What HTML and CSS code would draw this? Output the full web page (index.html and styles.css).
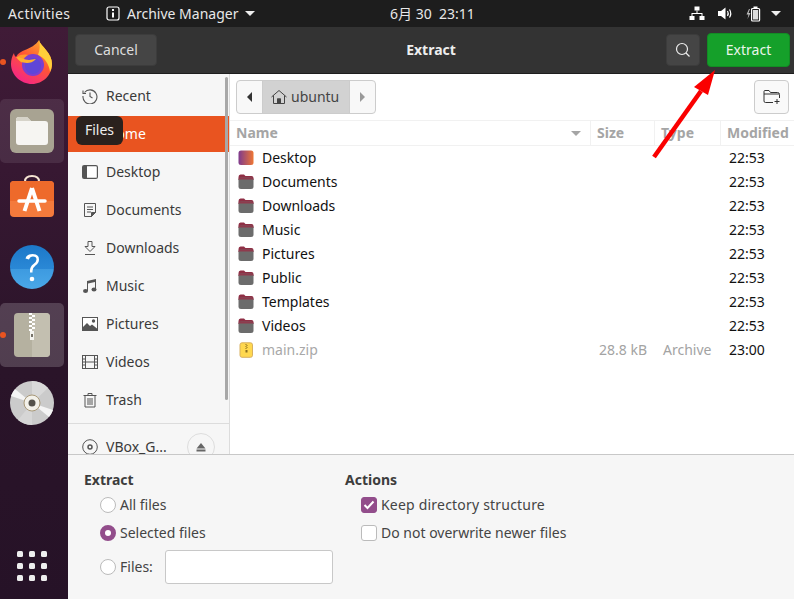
FILE: index.html
```html
<!DOCTYPE html>
<html lang="en">
<head>
<meta charset="utf-8">
<title>Extract</title>
<link rel="stylesheet" href="styles.css">
</head>
<body>
<svg class="defs" width="0" height="0" aria-hidden="true">
  <defs>
    <linearGradient id="deskg" x1="0" x2="1" y1="0" y2="0"><stop offset="0" stop-color="#7e3a8e"/><stop offset="1" stop-color="#ee7634"/></linearGradient>
    <linearGradient id="foxg" x1="0.8" x2="0.2" y1="0" y2="1"><stop offset="0" stop-color="#ffb02e"/><stop offset=".45" stop-color="#ff5634"/><stop offset="1" stop-color="#f5208f"/></linearGradient>
    <linearGradient id="helpg" x1="0" x2="0" y1="0" y2="1"><stop offset="0" stop-color="#1c78c8"/><stop offset=".54" stop-color="#2a88d6"/><stop offset=".54" stop-color="#3d9ae0"/><stop offset="1" stop-color="#4aa8e8"/></linearGradient>
    <symbol id="folder" viewBox="0 0 16 16">
      <path d="M0.500 5V3q0-2.500 2-2.500h3.500l1.500 1.500h6q2 0 2 2V6H0.500z" fill="#8f2f45"/>
      <rect x="0.5" y="3.500" width="15" height="11.500" rx="2.500" fill="#6c6c6c"/>
      <path d="M0.500 5.500q0-2 2-2h11q2 0 2 2z" fill="#8f3a4d"/>
    </symbol>
  </defs>
</svg>

<header class="topbar">
  <span class="top-activities">Activities</span>
  <span class="top-app">
    <svg width="14" height="15" viewBox="0 0 14 15"><rect x="1" y="1" width="12" height="13" rx="2" fill="none" stroke="#fff" stroke-width="1.200"/><rect x="6" y="3" width="2" height="2" fill="#fff"/><rect x="6" y="6.500" width="2" height="5" fill="#fff"/></svg>
    <span>Archive Manager</span>
    <i class="caret"></i>
  </span>
  <time class="top-clock">6月 30&nbsp; 23:11</time>
  <span class="top-tray">
    <svg width="16" height="16" viewBox="0 0 16 16" fill="#fff"><rect x="5.500" y="0.500" width="5" height="4"/><rect x="0.500" y="10" width="5" height="4"/><rect x="10.500" y="10" width="5" height="4"/><path d="M7.500 4.500h1V7h5v3h-1V8H3.500v2h-1V7h5z"/></svg>
    <svg width="16" height="16" viewBox="0 0 16 16" fill="none"><path d="M1 5h3L8.500 1.500v12L4 10H1z" fill="#fff"/><path d="M10.500 5q1.500 2.500 0 5M12.500 3.500q2.500 4 0 8" stroke="#fff" stroke-width="1.200"/></svg>
    <svg class="tray-battery" width="15" height="16" viewBox="0 0 15 16"><path d="M3 3L0.500 8.500H2.500L1.500 13 4.500 7H2.500L4 3z" fill="#bbb"/><rect x="5.600" y="2.500" width="8" height="12.500" rx="1" fill="none" stroke="#fff" stroke-width="1.200"/><rect x="7.500" y="0.500" width="4" height="2" fill="#fff"/><rect x="7" y="4" width="5.200" height="9.500" fill="#ddd"/></svg>
    <i class="caret tray-caret"></i>
  </span>
</header>

<div class="desktop">
  <nav class="dock">
    <div class="tile tile-fox">
      <i class="pip"></i>
      <svg width="46" height="46" viewBox="0 0 46 46">
        <path d="M30 1c1 4 4 6 7 10 4 5 6 9 6 14 0 11-9 20-20 20S2 36 2 25c0-4 1-8 3-11 0 2 1 3 2 4 2-4 6-6 9-7 5-2 11-5 14-10z" fill="url(#foxg)"/>
        <path d="M30 1c1 4 4 6 7 10 4 5 6 9 6 14 0 3-1 6-2 8-1-8-5-14-12-17 2-5 2-10 1-15z" fill="#ffcf3a"/>
        <path d="M8 18c4-3 9-3 13-1 5 0 9 3 9 9-3-4-9-4-14-1-3-1-6-3-8-7z" fill="#ff9a2a"/>
        <circle cx="24" cy="26" r="11" fill="#7b3fd0"/>
        <circle cx="24" cy="27" r="8" fill="#5f46d8"/>
        <path d="M7 18c5 0 8 3 13 3 2 0 4-1 7-1-3 3-6 4-9 4-5 0-9-3-11-6z" fill="#ffb02e"/>
      </svg>
    </div>
    <div class="tile tile-soft">
      <svg width="44" height="44" viewBox="0 0 44 44">
        <rect x="0" y="0" width="44" height="44" rx="6" fill="#a8a392"/>
        <path d="M6 11q0-3 3-3h8l4 4h14q3 0 3 3v18q0 3-3 3H9q-3 0-3-3z" fill="#f6f5f2"/>
        <path d="M6 12q0-4 3-4h8l4 4z" fill="#d6d3c9"/>
      </svg>
    </div>
    <div class="tile tile-shop">
      <svg width="44" height="42" viewBox="0 0 44 42">
        <path d="M15 8V6.500q0-5.500 7-5.500t7 5.500V8" fill="none" stroke="#f6e4d2" stroke-width="2"/>
        <rect x="0" y="6" width="44" height="36" rx="4" fill="#f47a3c"/>
        <path d="M0 10q0-4 4-4h36q4 0 4 4v16H0z" fill="#ee6a2b"/>
        <path d="M22 13L14.500 36M22 13L29.500 36" fill="none" stroke="#fff" stroke-width="4"/>
        <path d="M9 26h26" stroke="#fff" stroke-width="3.500" stroke-linecap="round"/>
      </svg>
    </div>
    <div class="tile">
      <svg width="44" height="44" viewBox="0 0 44 44">
        <circle cx="22" cy="22" r="22" fill="url(#helpg)"/>
        <path d="M15.500 13.500q1-4.500 7-4.500 6.500 0 6.500 5.500 0 3.500-3.500 6-3 2.200-3 5.500v1.500h-2.500v-2q0-4 3.500-6.500 3-2.200 3-4.500 0-3-3.500-3-3 0-4 3z" fill="#fff"/>
        <circle cx="22" cy="34" r="2.300" fill="#fff"/>
      </svg>
    </div>
    <div class="tile tile-strong">
      <i class="pip"></i>
      <svg width="36" height="44" viewBox="0 0 36 44">
        <rect x="0" y="0" width="36" height="44" rx="4" fill="#b5b1a0"/>
        <path d="M18 0h14q4 0 4 4v36q0 4-4 4H18z" fill="#c3bfb0"/>
        <rect x="15" y="0" width="3" height="2" fill="#fff"/><rect x="18" y="2" width="3" height="2" fill="#fff"/><rect x="15" y="4" width="3" height="2" fill="#fff"/><rect x="18" y="6" width="3" height="2" fill="#fff"/><rect x="15" y="8" width="3" height="2" fill="#fff"/><rect x="18" y="10" width="3" height="2" fill="#fff"/><rect x="15" y="12" width="3" height="2" fill="#fff"/><rect x="18" y="14" width="3" height="2" fill="#fff"/><rect x="15" y="16" width="3" height="2" fill="#fff"/>
        <rect x="16" y="18" width="4" height="9" fill="#f4f4f0"/>
        <rect x="17" y="21" width="2" height="3" fill="#77736a"/>
      </svg>
    </div>
    <div class="tile">
      <svg width="44" height="44" viewBox="0 0 44 44">
        <circle cx="22" cy="22" r="22" fill="#cbcbcb"/>
        <path d="M22 22L1 15A22 22 0 0 1 5 8z" fill="#f4f4f4"/>
        <path d="M22 22L43 29A22 22 0 0 1 39 36z" fill="#f4f4f4"/>
        <path d="M22 22L22 0A22 22 0 0 1 38 7z" fill="#d9d9d9"/>
        <path d="M22 22L22 44A22 22 0 0 1 8 39z" fill="#d6d6d6"/>
        <circle cx="22" cy="22" r="8" fill="#f3f1ea" stroke="#a89878"/>
        <circle cx="22" cy="22" r="3.500" fill="#55524c"/>
      </svg>
    </div>
    <div class="dock-grid" aria-label="Show Applications">
      <i></i><i></i><i></i><i></i><i></i><i></i><i></i><i></i><i></i>
    </div>
  </nav>

  <main class="dialog">
    <div class="headerbar">
      <button class="hb-btn hb-cancel">Cancel</button>
      <h1 class="hb-title">Extract</h1>
      <button class="hb-btn hb-search">
        <svg width="16" height="16" viewBox="0 0 16 16" fill="none" stroke="#eee" stroke-width="1.200"><circle cx="7" cy="7" r="5.500"/><path d="M11 11l3.500 3.500"/></svg>
      </button>
      <button class="hb-extract">Extract</button>
    </div>

    <div class="chooser">
      <aside class="sidebar">
        <ul class="places">
          <li class="place"><svg width="16" height="16" viewBox="0 0 16 16" fill="none" stroke="#555" stroke-width="1.100"><path d="M2.500 4.500A7 7 0 1 1 1 8M1 2.500v3h3"/><path d="M8 4.500V8.500l2.500 1.500"/></svg><span>Recent</span></li>
          <li class="place place-selected"><svg width="16" height="16" viewBox="0 0 16 16" fill="none" stroke="#fff"><path d="M1 8l7-6 7 6M3 7v7h10V7"/></svg><span>Home</span></li>
          <li class="place"><svg width="16" height="14" viewBox="0 0 16 14"><rect x="0.600" y="0.600" width="14.800" height="12.800" rx="1.500" fill="#fff" stroke="#555" stroke-width="1.200"/><rect x="1" y="1" width="4" height="12" fill="#555"/></svg><span>Desktop</span></li>
          <li class="place"><svg width="16" height="16" viewBox="0 0 16 16" fill="none" stroke="#555"><path d="M2.500 1.500h11v9l-4 4h-7z"/><path d="M5 5h6M5 7.500h6M5 10h4"/><path d="M9.500 14.500v-4h4z" fill="#555"/></svg><span>Documents</span></li>
          <li class="place"><svg width="16" height="16" viewBox="0 0 16 16" fill="none" stroke="#555"><path d="M6 1.500h4v5h3L8 11.500 3 6.500h3z"/><path d="M3 14.500h10"/></svg><span>Downloads</span></li>
          <li class="place"><svg width="16" height="16" viewBox="0 0 16 16" fill="#555"><ellipse cx="3.500" cy="13" rx="2.500" ry="2"/><ellipse cx="12" cy="11.500" rx="2.500" ry="2"/><path d="M5 13V3l9-2v10.500h-1V4L6 5.500V13z"/></svg><span>Music</span></li>
          <li class="place"><svg width="16" height="14" viewBox="0 0 16 14"><rect x="0.500" y="0.500" width="15" height="13" fill="#fff" stroke="#555"/><path d="M1 13V10l4-4 3 3 2-1.500 5 4V13z" fill="#555"/><circle cx="11.500" cy="4" r="1.700" fill="#555"/></svg><span>Pictures</span></li>
          <li class="place"><svg width="16" height="14" viewBox="0 0 16 14" fill="none" stroke="#555"><rect x="0.500" y="0.500" width="15" height="13"/><path d="M3.500 0.500v13M12.500 0.500v13M3.500 7h9M0.500 4h3M0.500 7h3M0.500 10h3M12.500 4h3M12.500 7h3M12.500 10h3"/></svg><span>Videos</span></li>
          <li class="place"><svg width="16" height="16" viewBox="0 0 16 16" fill="none" stroke="#555"><path d="M1.500 3.500h13M6 3.500V1.500h4v2M3 3.500v11.500h10V3.500M6 6v7M8 6v7M10 6v7"/></svg><span>Trash</span></li>
        </ul>
        <div class="sidebar-rule"></div>
        <div class="place place-device">
          <svg width="16" height="16" viewBox="0 0 16 16" fill="none" stroke="#555"><circle cx="8" cy="8" r="7.300"/><circle cx="8" cy="8" r="2" stroke-width="1.500"/></svg>
          <span class="device-name">VBox_G...</span>
          <span class="eject"><svg width="10" height="10" viewBox="0 0 10 10" fill="#666"><path d="M5 1l4.500 5.500h-9z"/><rect x="0.500" y="7.500" width="9" height="2"/></svg></span>
        </div>
        <div class="scrollbar"></div>
      </aside>

      <section class="files">
        <div class="pathrow">
          <div class="pathbar">
            <span class="path-nav"><i class="tri-left"></i></span>
            <span class="path-current">
              <svg width="16" height="16" viewBox="0 0 16 16" fill="none" stroke="#444"><path d="M0.500 8L8 1.500 15.500 8M2.500 6.500v8h4V10h3v4.500h4v-8"/><rect x="6.500" y="10" width="3" height="4.500" fill="#444"/></svg>
              <span>ubuntu</span>
            </span>
            <span class="path-nav"><i class="tri-right"></i></span>
          </div>
          <span class="newfolder">
            <svg width="18" height="16" viewBox="0 0 18 16" fill="none" stroke="#333"><path d="M10 13.500H2.500q-1.500 0-1.500-1.500V2.500q0-1 1-1h4l1.500 2h7q2 0 2 2V9M1 5h15"/><path d="M14 10v5M11.500 12.500h5"/></svg>
          </span>
        </div>
        <div class="file-head">
          <div class="fh fh-name"><span>Name</span><i class="sort"></i></div>
          <div class="fh">Size</div>
          <div class="fh">Type</div>
          <div class="fh">Modified</div>
        </div>
        <ul class="file-list">
          <li class="file"><span class="fname"><svg width="16" height="16" viewBox="0 0 16 16"><rect x="0.500" y="0.500" width="15" height="14.500" rx="2.500" fill="url(#deskg)"/></svg>Desktop</span><span></span><span></span><span class="ftime">22:53</span></li>
          <li class="file"><span class="fname"><svg width="16" height="16"><use href="#folder"/></svg>Documents</span><span></span><span></span><span class="ftime">22:53</span></li>
          <li class="file"><span class="fname"><svg width="16" height="16"><use href="#folder"/></svg>Downloads</span><span></span><span></span><span class="ftime">22:53</span></li>
          <li class="file"><span class="fname"><svg width="16" height="16"><use href="#folder"/></svg>Music</span><span></span><span></span><span class="ftime">22:53</span></li>
          <li class="file"><span class="fname"><svg width="16" height="16"><use href="#folder"/></svg>Pictures</span><span></span><span></span><span class="ftime">22:53</span></li>
          <li class="file"><span class="fname"><svg width="16" height="16"><use href="#folder"/></svg>Public</span><span></span><span></span><span class="ftime">22:53</span></li>
          <li class="file"><span class="fname"><svg width="16" height="16"><use href="#folder"/></svg>Templates</span><span></span><span></span><span class="ftime">22:53</span></li>
          <li class="file"><span class="fname"><svg width="16" height="16"><use href="#folder"/></svg>Videos</span><span></span><span></span><span class="ftime">22:53</span></li>
          <li class="file file-dim"><span class="fname"><svg width="16" height="16" viewBox="0 0 16 16"><rect x="2" y="0.800" width="12.500" height="14.500" rx="2" fill="#ffd84f" stroke="#d8b060"/><path d="M7.500 2h1v1h-1zM8.500 3h1v1h-1zM7.500 4h1v1h-1zM8.500 5h1v1h-1zM7.500 6h1v1h-1zM7.500 8h2v2.500h-2z" fill="#8a6d1f"/></svg>main.zip</span><span class="fsize">28.8 kB</span><span class="ftype">Archive</span><span class="ftime">23:00</span></li>
        </ul>
      </section>
    </div>

    <div class="options">
      <div class="opt-col opt-extract">
        <h2 class="opt-title">Extract</h2>
        <label class="opt"><i class="radio"></i><span>All files</span></label>
        <label class="opt"><i class="radio radio-on"></i><span>Selected files</span></label>
        <label class="opt opt-files"><i class="radio"></i><span>Files:</span><b class="files-input"></b></label>
      </div>
      <div class="opt-col opt-actions">
        <h2 class="opt-title">Actions</h2>
        <label class="opt opt-wide"><i class="check check-on"><svg width="12" height="10" viewBox="0 0 12 10" fill="none" stroke="#fff" stroke-width="2"><path d="M1.500 5l3 3 6-6.500"/></svg></i><span>Keep directory structure</span></label>
        <label class="opt"><i class="check"></i><span>Do not overwrite newer files</span></label>
      </div>
    </div>
  </main>
</div>

<div class="tooltip">Files</div>
<svg class="arrow" width="70" height="100" viewBox="0 0 70 100"><path d="M3 90L50 24" stroke="#fa0000" stroke-width="4.500" fill="none"/><path d="M64 3L57 28 43 20z" fill="#fa0000"/></svg>
</body>
</html>
```
FILE: styles.css
```css
* { box-sizing: border-box; }
html, body { margin: 0; padding: 0; }
body {
  width: 794px;
  height: 599px;
  overflow: hidden;
  position: relative;
  font-family: "Noto Sans", "Noto Sans CJK SC", sans-serif;
  font-size: 14px;
  background: #2c1428;
  display: flex;
  flex-direction: column;
}
.defs { position: absolute; }
ul { list-style: none; margin: 0; padding: 0; }
h1, h2 { margin: 0; font-weight: 700; }
i { display: block; }
svg { display: block; flex: none; }

/* top bar */
.topbar {
  height: 27px;
  flex: none;
  background: #1d1d1d;
  color: #e8e8e8;
  display: grid;
  grid-template-columns: 98px 1fr auto;
  align-items: center;
  padding-left: 8px;
  padding-right: 13px;
  position: relative;
}
.top-activities { white-space: nowrap; letter-spacing: .4px; }
.top-app { display: flex; align-items: center; gap: 7px; white-space: nowrap; }
.caret { width: 0; height: 0; border-left: 5px solid transparent; border-right: 5px solid transparent; border-top: 5px solid #eee; }
.top-clock { position: absolute; left: 390px; top: 5px; font-size: 14px; line-height: 18px; white-space: nowrap; }
.top-tray { display: flex; align-items: center; gap: 12px; }
.tray-battery { margin-left: 1px; }
.tray-caret { margin-left: -2px; }

/* dock */
.desktop { flex: 1; display: flex; min-height: 0; }
.dock {
  width: 68px;
  flex: none;
  background: linear-gradient(180deg, #401b37 0%, #371832 25%, #2a1429 60%, #261227 100%);
  display: flex;
  flex-direction: column;
  padding-top: 3px;
  padding-right: 4px;
  gap: 4px;
}
.tile { position: relative; height: 64px; border-radius: 5px; display: flex; align-items: center; justify-content: center; flex: none; }
.tile-soft { background: rgba(255, 255, 255, .09); }
.tile-strong { background: rgba(255, 255, 255, .18); }
.tile-fox { margin-bottom: 1px; }
.tile-shop { margin-top: -3px; margin-bottom: 3px; }
.pip { position: absolute; left: 0; top: 50%; margin-top: -3px; width: 6px; height: 6px; border-radius: 50%; background: #e95420; }
.dock-grid {
  margin-top: auto;
  margin-bottom: 18px;
  align-self: center;
  display: grid;
  grid-template-columns: repeat(3, 6px);
  grid-auto-rows: 6px;
  gap: 6px;
}
.dock-grid i { background: #eee; border-radius: 1.500px; }

/* dialog */
.dialog { flex: 1; display: flex; flex-direction: column; min-width: 0; background: #f6f6f6; }
.headerbar {
  height: 47px;
  flex: none;
  background: #333;
  border-bottom: 1px solid #1e1e1e;
  display: flex;
  align-items: center;
  padding: 0 4px 0 7px;
  color: #eee;
}
.hb-btn {
  font: inherit;
  height: 32px;
  color: #ddd;
  background: #454545;
  border: 1px solid #3c3c3c;
  border-radius: 4px;
  padding: 0 0 1px;
  display: flex;
  align-items: center;
  justify-content: center;
}
.hb-cancel { width: 82px; }
.hb-title { flex: 1; text-align: center; font-size: 14px; color: #eee; padding: 0 0 2px 39px; }
.hb-search { width: 34px; }
.hb-extract {
  font: inherit;
  margin-left: 7px;
  width: 83px;
  height: 34px;
  background: #15a02a;
  color: #e9f6ea;
  border: 1px solid #128c24;
  border-radius: 4px;
  padding: 0 0 1px;
}

.chooser { height: 380px; flex: none; display: flex; background: #fff; overflow: hidden; }

/* sidebar */
.sidebar {
  width: 162px;
  flex: none;
  background: #f6f6f6;
  border-right: 1px solid #dcdcdc;
  padding-top: 3px;
  position: relative;
  color: #3a3a3a;
}
.place { height: 38px; display: flex; align-items: center; gap: 8px; padding-left: 14px; white-space: nowrap; }
.place span:not(.eject) { margin-top: -2px; }
.place-selected { height: 36px; margin: 1px 0; background: #e95420; color: #fff; }
.sidebar-rule { height: 1px; background: #dcdcdc; margin-top: 4px; }
.place-device { margin-top: 3px; height: 40px; }
.device-name { width: 68px; }
.eject {
  margin-left: 5px;
  width: 28px; height: 28px;
  border: 1px solid #ddd;
  border-radius: 50%;
  display: flex; align-items: center; justify-content: center;
}
.scrollbar { position: absolute; right: 1px; top: 3px; height: 323px; width: 3px; background: #a8a8a8; border-radius: 2px; }

/* files */
.files { flex: 1; min-width: 0; background: #fff; }
.pathrow { height: 47px; display: flex; justify-content: space-between; align-items: flex-start; padding: 6px 5px 0 6px; border-bottom: 1px solid #f1f1f1; }
.pathbar { display: flex; width: 140px; height: 34px; border: 1px solid #ccc; border-radius: 4px; overflow: hidden; background: #f8f8f8; }
.path-nav { width: 25px; display: flex; align-items: center; justify-content: center; }
.path-current { flex: 1; background: #d2d2d2; display: flex; align-items: center; gap: 4px; padding-left: 8px; color: #444; border-left: 1px solid #ccc; border-right: 1px solid #ccc; }
.path-current span { margin-top: -2px; }
.tri-left { width: 0; height: 0; border: 5px solid transparent; border-left: 0; border-right: 5px solid #333; }
.tri-right { width: 0; height: 0; border: 5px solid transparent; border-right: 0; border-left: 5px solid #999; }
.newfolder { width: 35px; height: 34px; border: 1px solid #ccc; border-radius: 4px; background: #f9f9f9; display: flex; align-items: center; justify-content: center; }

.file-head, .file { display: grid; grid-template-columns: 360px 64px 66px 74px; }
.file-head { height: 25px; border-bottom: 1px solid #f1f1f1; color: #a5a5a5; font-weight: 700; align-items: stretch; }
.fh { padding: 0 0 2px 6px; display: flex; align-items: center; border-left: 1px solid #f1f1f1; white-space: nowrap; }
.fh-name { border-left: 0; justify-content: space-between; padding-right: 9px; }
.sort { width: 0; height: 0; border-left: 5px solid transparent; border-right: 5px solid transparent; border-top: 5px solid #a5a5a5; margin-top: 2px; }
.file { height: 24px; align-items: center; color: #111; padding-bottom: 2px; }
.fname { display: flex; align-items: center; gap: 8px; padding-left: 8px; }
.fname svg { margin-top: 2px; }
.ftime { padding-left: 9px; }
.file-dim { color: #a3a3a3; }
.file-dim .ftime { color: #111; }
.file-dim .fname { color: #a8a8a8; }
.fsize { text-align: right; padding-right: 7px; white-space: nowrap; }
.ftype { padding-left: 9px; }
.ftime, .fsize, .ftype { white-space: nowrap; }

/* options */
.options {
  flex: 1;
  background: #f6f6f6;
  border-top: 1px solid #c8c8c8;
  display: flex;
  padding: 16px 0 0 16px;
  color: #444;
}
.opt-col { display: flex; flex-direction: column; }
.opt-extract { width: 261px; }
.opt-title { font-size: 14px; color: #3d3d3d; line-height: 18px; margin-bottom: 2px; }
.opt { display: flex; align-items: center; height: 28px; gap: 4px; padding-left: 16px; white-space: nowrap; }
.opt span { margin-top: -2px; }
.opt-wide { letter-spacing: .2px; }
.opt-files { height: 34px; margin-top: 3px; }
.radio { width: 16px; height: 16px; border-radius: 50%; background: #fff; border: 1px solid #bbb; flex: none; }
.radio-on { background: #924d8b; border: 5px solid #924d8b; position: relative; }
.radio-on::after { content: ""; position: absolute; inset: 0; background: #fff; border-radius: 50%; }
.files-input { display: block; width: 168px; height: 34px; margin-left: 8px; background: #fff; border: 1px solid #c8c8c8; border-radius: 3px; }
.check { width: 16px; height: 16px; border-radius: 3px; background: #fff; border: 1px solid #bbb; flex: none; display: flex; align-items: center; justify-content: center; }
.check-on { background: #924d8b; border-color: #924d8b; }

/* overlays */
.tooltip {
  position: absolute;
  left: 76px; top: 116px;
  width: 47px; height: 29px;
  padding-bottom: 2px;
  background: #2a211d;
  color: #eee;
  border-radius: 6px;
  display: flex; align-items: center; justify-content: center;
}
.arrow { position: absolute; left: 651px; top: 67px; }
```
